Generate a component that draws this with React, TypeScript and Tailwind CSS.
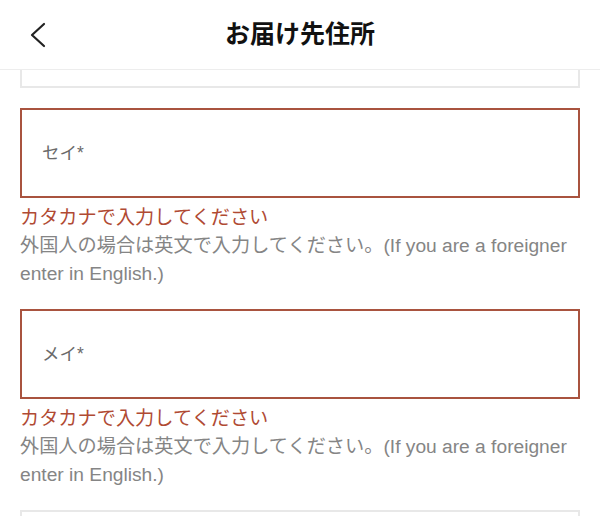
import React from 'react';

const fontStack = {
  fontFamily: '"Liberation Sans", "Noto Sans CJK JP", sans-serif',
};

interface NameFieldProps {
  label: string;
}

function NameField({ label }: NameFieldProps) {
  return (
    <div>
      <div className="flex h-[90px] items-center border-2 border-[#a9533f] px-5">
        <span className="text-[17.5px] text-[#6a6a6a]">{label}</span>
      </div>
      <p className="mt-[5px] text-[19.2px] leading-[29px] text-[#b04a33]">
        カタカナで入力してください
      </p>
      <p className="text-[19.2px] leading-[28px] text-[#858585]">
        外国人の場合は英文で入力してください。(If you are a foreigner
        <br />
        enter in English.)
      </p>
    </div>
  );
}

export default function App() {
  return (
    <div className="h-[516px] w-[600px] overflow-hidden bg-white" style={fontStack}>
      <header className="grid h-[70px] grid-cols-[1fr_auto_1fr] items-center border-b border-[#ededed]">
        <button className="flex h-full w-[70px] items-center pl-[28px]">
          <svg width="20" height="26" viewBox="0 0 20 26" fill="none">
            <path d="M16 2 L4 13 L16 24" stroke="#222" strokeWidth="2.2" strokeLinecap="round" strokeLinejoin="round" />
          </svg>
        </button>
        <h1 className="text-[25px] font-bold text-[#111]">お届け先住所</h1>
        <div />
      </header>

      <main className="flex flex-col px-5">
        <div className="h-[18px] border-2 border-t-0 border-[#e8e8e8]" />
        <div className="mt-5 flex flex-col gap-[21px]">
          <NameField label="セイ*" />
          <NameField label="メイ*" />
          <div className="h-[60px] border-2 border-[#e8e8e8]" />
        </div>
      </main>
    </div>
  );
}
